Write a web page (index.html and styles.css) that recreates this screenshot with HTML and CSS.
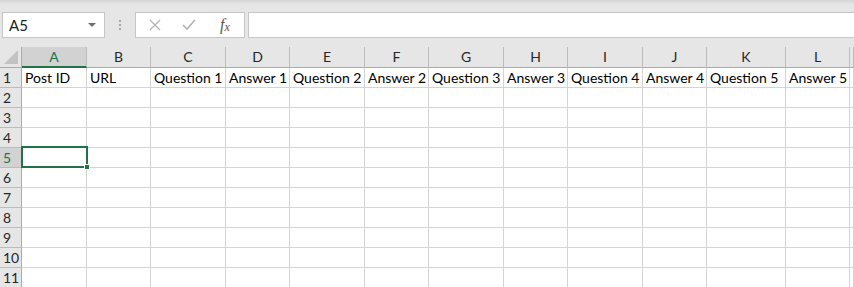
FILE: index.html
```html
<!DOCTYPE html>
<html>
<head>
<meta charset="utf-8">
<link rel="stylesheet" href="styles.css">
</head>
<body>
<div class="toolbar">
  <div class="namebox">
    <span class="name">A5</span>
    <span class="caret"></span>
  </div>
  <div class="dots"><i></i><i></i><i></i></div>
  <div class="fbtns">
    <svg class="ic-x" width="12" height="12" viewBox="0 0 12 12"><path d="M1 1 L11 11 M11 1 L1 11" stroke="#b3b3b3" stroke-width="1.3" fill="none"/></svg>
    <svg class="ic-ok" width="14" height="12" viewBox="0 0 14 12"><path d="M1 6 L5 10 L13 1" stroke="#b3b3b3" stroke-width="1.6" fill="none"/></svg>
    <span class="fx">f<sub>x</sub></span>
  </div>
  <div class="finput"></div>
</div>
<div class="grid">
  <div class="corner"><span class="tri"></span></div>
  <div class="ch sel">A</div><div class="ch">B</div><div class="ch">C</div><div class="ch">D</div><div class="ch">E</div><div class="ch">F</div><div class="ch">G</div><div class="ch">H</div><div class="ch">I</div><div class="ch">J</div><div class="ch">K</div><div class="ch">L</div><div class="ch"></div>

  <div class="rh">1</div><div class="c">Post ID</div><div class="c">URL</div><div class="c">Question 1</div><div class="c">Answer 1</div><div class="c">Question 2</div><div class="c">Answer 2</div><div class="c">Question 3</div><div class="c">Answer 3</div><div class="c">Question 4</div><div class="c">Answer 4</div><div class="c">Question 5</div><div class="c">Answer 5</div><div class="c"></div>

  <div class="rh">2</div><div class="c"></div><div class="c"></div><div class="c"></div><div class="c"></div><div class="c"></div><div class="c"></div><div class="c"></div><div class="c"></div><div class="c"></div><div class="c"></div><div class="c"></div><div class="c"></div><div class="c"></div>
  <div class="rh">3</div><div class="c"></div><div class="c"></div><div class="c"></div><div class="c"></div><div class="c"></div><div class="c"></div><div class="c"></div><div class="c"></div><div class="c"></div><div class="c"></div><div class="c"></div><div class="c"></div><div class="c"></div>
  <div class="rh">4</div><div class="c"></div><div class="c"></div><div class="c"></div><div class="c"></div><div class="c"></div><div class="c"></div><div class="c"></div><div class="c"></div><div class="c"></div><div class="c"></div><div class="c"></div><div class="c"></div><div class="c"></div>
  <div class="rh rsel">5</div><div class="c active"><span class="selbox"><span class="handle"></span></span></div><div class="c"></div><div class="c"></div><div class="c"></div><div class="c"></div><div class="c"></div><div class="c"></div><div class="c"></div><div class="c"></div><div class="c"></div><div class="c"></div><div class="c"></div><div class="c"></div>
  <div class="rh">6</div><div class="c"></div><div class="c"></div><div class="c"></div><div class="c"></div><div class="c"></div><div class="c"></div><div class="c"></div><div class="c"></div><div class="c"></div><div class="c"></div><div class="c"></div><div class="c"></div><div class="c"></div>
  <div class="rh">7</div><div class="c"></div><div class="c"></div><div class="c"></div><div class="c"></div><div class="c"></div><div class="c"></div><div class="c"></div><div class="c"></div><div class="c"></div><div class="c"></div><div class="c"></div><div class="c"></div><div class="c"></div>
  <div class="rh">8</div><div class="c"></div><div class="c"></div><div class="c"></div><div class="c"></div><div class="c"></div><div class="c"></div><div class="c"></div><div class="c"></div><div class="c"></div><div class="c"></div><div class="c"></div><div class="c"></div><div class="c"></div>
  <div class="rh">9</div><div class="c"></div><div class="c"></div><div class="c"></div><div class="c"></div><div class="c"></div><div class="c"></div><div class="c"></div><div class="c"></div><div class="c"></div><div class="c"></div><div class="c"></div><div class="c"></div><div class="c"></div>
  <div class="rh">10</div><div class="c"></div><div class="c"></div><div class="c"></div><div class="c"></div><div class="c"></div><div class="c"></div><div class="c"></div><div class="c"></div><div class="c"></div><div class="c"></div><div class="c"></div><div class="c"></div><div class="c"></div>
  <div class="rh">11</div><div class="c"></div><div class="c"></div><div class="c"></div><div class="c"></div><div class="c"></div><div class="c"></div><div class="c"></div><div class="c"></div><div class="c"></div><div class="c"></div><div class="c"></div><div class="c"></div><div class="c"></div>
</div>
</body>
</html>
```

FILE: styles.css
```css
* { box-sizing: border-box; }
html, body { margin: 0; padding: 0; }
body {
  width: 854px;
  height: 287px;
  overflow: hidden;
  background: #fff;
  font-family: Lato, "Liberation Sans", sans-serif;
  color: #000;
}
.toolbar {
  height: 47px;
  background: linear-gradient(#d4d4d4 0, #e2e2e2 3px, #e6e6e6 5px);
  display: flex;
  align-items: flex-start;
  padding: 12px 0 0 2px;
}
.namebox {
  width: 103px;
  height: 26px;
  background: #fff;
  border: 1px solid #c6c6c6;
  display: flex;
  align-items: center;
  justify-content: space-between;
  padding: 0 8px 0 6px;
  font-size: 15px;
  color: #222;
}
.caret {
  width: 0; height: 0;
  border-left: 4px solid transparent;
  border-right: 4px solid transparent;
  border-top: 4px solid #6f6f6f;
}
.dots {
  width: 30px;
  height: 26px;
  display: flex;
  flex-direction: column;
  align-items: center;
  justify-content: center;
  gap: 2px;
}
.dots i {
  display: block;
  width: 2px; height: 2px;
  background: #a8a8a8;
}
.fbtns {
  width: 110px;
  height: 26px;
  background: #fff;
  border: 1px solid #c6c6c6;
  display: flex;
  align-items: center;
  padding-left: 13px;
}
.ic-x { margin-right: 21px; }
.ic-ok { margin-right: 24px; }
.fx {
  font-family: "Liberation Serif", serif;
  font-style: italic;
  font-size: 16px;
  color: #555;
}
.fx sub { font-size: 12px; vertical-align: -1px; }
.finput {
  margin-left: 3px;
  flex: 1;
  height: 26px;
  background: #fff;
  border: 1px solid #c6c6c6;
  border-right: none;
}
.grid {
  display: grid;
  grid-template-columns: 22px 65px 64px 75px 64px 75px 64px 75px 64px 75px 64px 79px 64px 4px;
  grid-template-rows: 21px repeat(11, 20px);
}
.corner {
  background: #e6e6e6;
  border-right: 1px solid #ababab;
  border-bottom: 1px solid #ababab;
  position: relative;
}
.tri {
  position: absolute;
  right: 3px; bottom: 3px;
  width: 0; height: 0;
  border-left: 14px solid transparent;
  border-bottom: 14px solid #c2c2c2;
}
.ch {
  background: #e6e6e6;
  border-right: 1px solid #bcbcbc;
  border-bottom: 1px solid #ababab;
  text-align: center;
  font-size: 14px;
  line-height: 20px;
  color: #262626;
}
.ch.sel {
  background: #d2d2d2;
  border-bottom: 2px solid #217346;
  color: #217346;
}
.rh {
  background: #e6e6e6;
  border-right: 1px solid #ababab;
  border-bottom: 1px solid #bcbcbc;
  font-size: 14px;
  line-height: 20px;
  padding-left: 3px;
  color: #262626;
}
.rh.rsel {
  background: #d2d2d2;
  color: #217346;
}
.c {
  border-right: 1px solid #d4d4d4;
  border-bottom: 1px solid #d4d4d4;
  font-size: 14px;
  line-height: 20px;
  padding-left: 3px;
  white-space: nowrap;
  overflow: hidden;
  color: #000;
}
.c.active { position: relative; overflow: visible; }
.selbox {
  position: absolute;
  left: -1px; top: -2px;
  width: 67px; height: 22px;
  border: 2px solid #217346;
  z-index: 2;
}
.handle {
  position: absolute;
  right: -4px; bottom: -4px;
  width: 6px; height: 6px;
  background: #217346;
  border: 1px solid #fff;
}
```
